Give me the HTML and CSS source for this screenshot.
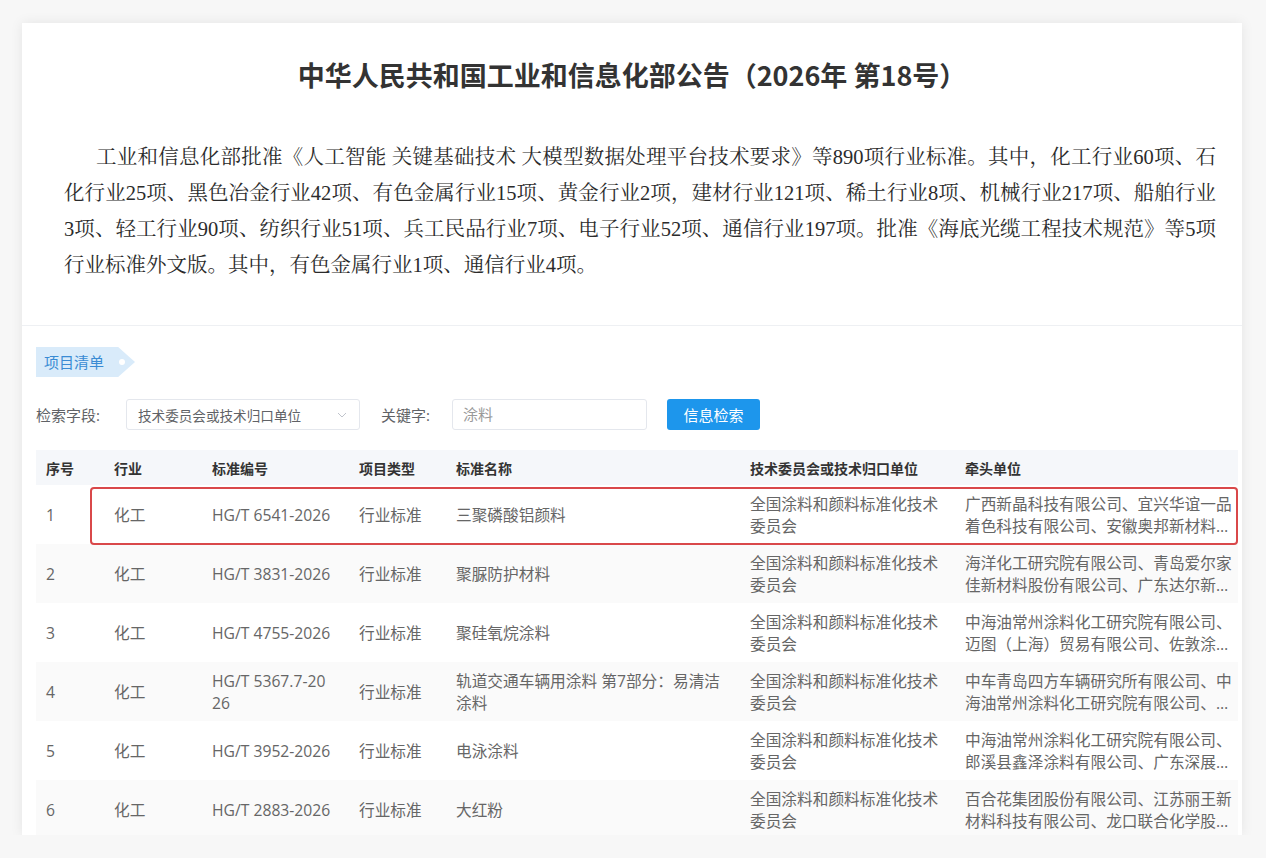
FILE: index.html
```html
<!DOCTYPE html>
<html lang="zh-CN">

<head>
    <meta charset="UTF-8">
    <meta name="viewport" content="width=device-width, initial-scale=1.0">
    <title>中华人民共和国工业和信息化部公告（2026年 第18号）</title>
    <link rel="stylesheet" href="styles.css">
</head>

<body>
    <div class="page">
        <div class="card">
            <!-- 公告正文 -->
            <section class="notice">
                <h1 class="notice-title">中华人民共和国工业和信息化部公告（2026年 第18号）</h1>
                <p class="notice-text">工业和信息化部批准《人工智能 关键基础技术 大模型数据处理平台技术要求》等890项行业标准。其中，化工行业60项、石化行业25项、黑色冶金行业42项、有色金属行业15项、黄金行业2项，建材行业121项、稀土行业8项、机械行业217项、船舶行业3项、轻工行业90项、纺织行业51项、兵工民品行业7项、电子行业52项、通信行业197项。批准《海底光缆工程技术规范》等5项行业标准外文版。其中，有色金属行业1项、通信行业4项。</p>
            </section>

            <!-- 项目清单 -->
            <section class="list">
                <div class="list-tag">项目清单</div>
                <div class="search">
                    <span class="search-label">检索字段:</span>
                    <div class="select">
                        <span>技术委员会或技术归口单位</span>
                        <svg width="10" height="6" viewBox="0 0 10 6"><path d="M1 1l4 4 4-4" fill="none" stroke="#c0c4cc" stroke-width="1"/></svg>
                    </div>
                    <span class="search-label">关键字:</span>
                    <div class="input">涂料</div>
                    <button class="btn-search">信息检索</button>
                </div>

                <div class="table-wrap">
                    <table class="std-table">
                        <colgroup>
                            <col class="c-no">
                            <col class="c-ind">
                            <col class="c-code">
                            <col class="c-type">
                            <col class="c-name">
                            <col class="c-tc">
                            <col class="c-lead">
                        </colgroup>
                        <thead>
                            <tr>
                                <th>序号</th>
                                <th>行业</th>
                                <th>标准编号</th>
                                <th>项目类型</th>
                                <th>标准名称</th>
                                <th>技术委员会或技术归口单位</th>
                                <th class="lead">牵头单位</th>
                            </tr>
                        </thead>
                        <tbody>
                            <tr>
                                <td>1</td>
                                <td>化工</td>
                                <td class="code">HG/T 6541-2026</td>
                                <td>行业标准</td>
                                <td>三聚磷酸铝颜料</td>
                                <td>全国涂料和颜料标准化技术委员会</td>
                                <td class="lead"><div class="clamp">广西新晶科技有限公司、宜兴华谊一品着色科技有限公司、安徽奥邦新材料有限公司、江苏晶晶新材料有限公司</div></td>
                            </tr>
                            <tr>
                                <td>2</td>
                                <td>化工</td>
                                <td class="code">HG/T 3831-2026</td>
                                <td>行业标准</td>
                                <td>聚脲防护材料</td>
                                <td>全国涂料和颜料标准化技术委员会</td>
                                <td class="lead"><div class="clamp">海洋化工研究院有限公司、青岛爱尔家佳新材料股份有限公司、广东达尔新型材料有限公司</div></td>
                            </tr>
                            <tr>
                                <td>3</td>
                                <td>化工</td>
                                <td class="code">HG/T 4755-2026</td>
                                <td>行业标准</td>
                                <td>聚硅氧烷涂料</td>
                                <td>全国涂料和颜料标准化技术委员会</td>
                                <td class="lead"><div class="clamp">中海油常州涂料化工研究院有限公司、迈图（上海）贸易有限公司、佐敦涂料（张家港）有限公司</div></td>
                            </tr>
                            <tr>
                                <td>4</td>
                                <td>化工</td>
                                <td class="code">HG/T 5367.7-2026</td>
                                <td>行业标准</td>
                                <td>轨道交通车辆用涂料 第7部分：易清洁涂料</td>
                                <td>全国涂料和颜料标准化技术委员会</td>
                                <td class="lead"><div class="clamp">中车青岛四方车辆研究所有限公司、中海油常州涂料化工研究院有限公司、株洲时代新材料科技股份有限公司</div></td>
                            </tr>
                            <tr>
                                <td>5</td>
                                <td>化工</td>
                                <td class="code">HG/T 3952-2026</td>
                                <td>行业标准</td>
                                <td>电泳涂料</td>
                                <td>全国涂料和颜料标准化技术委员会</td>
                                <td class="lead"><div class="clamp">中海油常州涂料化工研究院有限公司、郎溪县鑫泽涂料有限公司、广东深展实业有限公司</div></td>
                            </tr>
                            <tr>
                                <td>6</td>
                                <td>化工</td>
                                <td class="code">HG/T 2883-2026</td>
                                <td>行业标准</td>
                                <td>大红粉</td>
                                <td>全国涂料和颜料标准化技术委员会</td>
                                <td class="lead"><div class="clamp">百合花集团股份有限公司、江苏丽王新材料科技有限公司、龙口联合化学股份有限公司</div></td>
                            </tr>
                        </tbody>
                    </table>
                    <!-- 标注框 -->
                    <div class="mark"></div>
                </div>
            </section>
        </div>
    </div>
</body>

</html>
```

FILE: styles.css
```css
* {
    box-sizing: border-box;
}

body {
    margin: 0;
    background: #f7f7f7;
    font-family: "Open Sans", "Noto Sans CJK SC", sans-serif;
    color: #333;
}

.page {
    padding: 23px 24px 0 22px;
}

.card {
    background: #fff;
    box-shadow: 0 0 12px rgba(0, 0, 0, 0.08);
}

/* 公告 */
.notice {
    padding: 34px 26px 42px;
    border-bottom: 1px solid #eef0f3;
}

.notice-title {
    margin: 0;
    font-family: "Noto Sans CJK SC", sans-serif;
    font-size: 27px;
    line-height: 36px;
    font-weight: 700;
    text-align: center;
    color: #333;
}

.notice-text {
    margin: 46px 0 0 16px;
    font-family: "Liberation Serif", "Noto Serif CJK SC", "Noto Sans CJK SC", serif;
    font-size: 20.5px;
    line-height: 36px;
    text-indent: 32px;
    text-align: justify;
    color: #2b2b2b;
}

/* 项目清单 */
.list {
    padding: 21px 4px 0 14px;
}

.list-tag {
    position: relative;
    width: 99px;
    height: 30px;
    padding-left: 8px;
    line-height: 30px;
    font-size: 15px;
    color: #3a8bd4;
    background: #d9ebfa;
    clip-path: polygon(0 0, 83% 0, 100% 50%, 83% 100%, 0 100%);
}

.list-tag::after {
    content: "";
    position: absolute;
    right: 10px;
    top: 12px;
    width: 6px;
    height: 6px;
    border-radius: 50%;
    background: #fff;
}

.search {
    display: flex;
    align-items: center;
    height: 31px;
    margin-top: 22px;
    font-size: 15px;
}

.search-label {
    color: #606266;
}

.select {
    display: flex;
    align-items: center;
    justify-content: space-between;
    width: 234px;
    height: 31px;
    margin: 0 21px 0 26px;
    padding: 0 12px 0 11px;
    border: 1px solid #e4e7ed;
    border-radius: 3px;
    font-size: 13.6px;
    color: #606266;
}

.input {
    width: 195px;
    height: 31px;
    margin: 0 20px 0 22px;
    padding: 0 10px;
    line-height: 29px;
    border: 1px solid #e4e7ed;
    border-radius: 3px;
    color: #999;
}

.btn-search {
    width: 93px;
    height: 31px;
    border: none;
    border-radius: 3px;
    background: #1d96ec;
    color: #fff;
    font-family: inherit;
    font-size: 15px;
    cursor: pointer;
}

/* 表格 */
.table-wrap {
    position: relative;
    height: 385px;
    margin-top: 20px;
    overflow: hidden;
}

.std-table {
    width: 100%;
    border-collapse: collapse;
    table-layout: fixed;
}

.c-no { width: 68px; }
.c-ind { width: 98px; }
.c-code { width: 147px; }
.c-type { width: 97px; }
.c-name { width: 294px; }
.c-tc { width: 215px; }

.std-table th {
    height: 35px;
    padding: 0 10px;
    background: #f5f7fa;
    font-size: 14px;
    font-weight: 700;
    text-align: left;
    color: #333;
}

.std-table td {
    height: 59px;
    padding: 0 10px;
    font-size: 15.7px;
    line-height: 22px;
    color: #666;
    word-break: break-all;
}

.std-table td.code {
    padding-right: 16px;
}

.std-table .lead {
    padding-right: 4px;
}

.std-table tbody tr:nth-child(even) td {
    background: #fafafa;
}

.clamp {
    display: -webkit-box;
    -webkit-line-clamp: 2;
    -webkit-box-orient: vertical;
    overflow: hidden;
}

.mark {
    position: absolute;
    left: 54px;
    top: 37px;
    width: 1148px;
    height: 58px;
    border: 2px solid #d9484a;
    border-radius: 4px;
}
```
